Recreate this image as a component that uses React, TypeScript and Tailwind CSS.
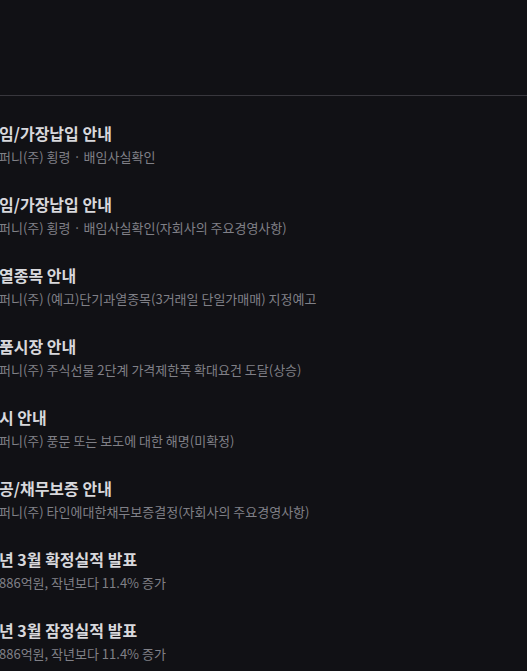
import React from 'react';

type Notice = {
  title: string;
  desc: string;
};

const notices: Notice[] = [
  { title: '임/가장납입 안내', desc: '퍼니(주) 횡령 · 배임사실확인' },
  { title: '임/가장납입 안내', desc: '퍼니(주) 횡령 · 배임사실확인(자회사의 주요경영사항)' },
  { title: '열종목 안내', desc: '퍼니(주) (예고)단기과열종목(3거래일 단일가매매) 지정예고' },
  { title: '품시장 안내', desc: '퍼니(주) 주식선물 2단계 가격제한폭 확대요건 도달(상승)' },
  { title: '시 안내', desc: '퍼니(주) 풍문 또는 보도에 대한 해명(미확정)' },
  { title: '공/채무보증 안내', desc: '퍼니(주) 타인에대한채무보증결정(자회사의 주요경영사항)' },
  { title: '년 3월 확정실적 발표', desc: '886억원, 작년보다 11.4% 증가' },
  { title: '년 3월 잠정실적 발표', desc: '886억원, 작년보다 11.4% 증가' },
];

const NoticeItem = ({ title, desc }: Notice) => {
  return (
    <li className="flex flex-col">
      <p className="text-[16px] leading-[22px] font-bold text-[#d8d8dc] whitespace-nowrap">{title}</p>
      <p className="mt-1 text-[13px] leading-[18px] text-[#808087] whitespace-nowrap">{desc}</p>
    </li>
  );
};

export default function App() {
  return (
    <div
      className="min-h-[671px] w-full overflow-hidden bg-[#111115]"
      style={{ fontFamily: '"Noto Sans CJK KR", "Noto Sans", sans-serif' }}
    >
      <header className="h-[96px] border-b border-[#38373d]" />
      <ul className="flex flex-col gap-[27px] pt-[26px] -ml-[1px]">
        {notices.map((n, i) => (
          <NoticeItem key={i} title={n.title} desc={n.desc} />
        ))}
      </ul>
    </div>
  );
}
